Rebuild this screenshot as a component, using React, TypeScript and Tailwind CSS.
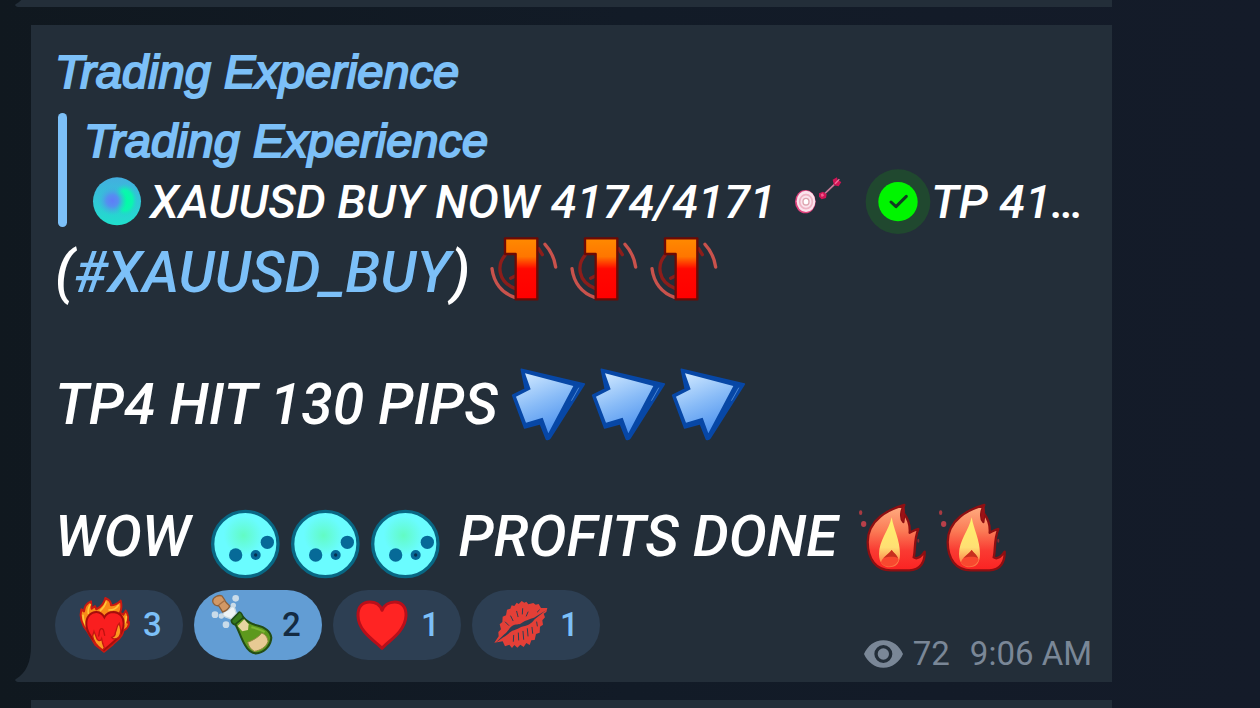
import React from "react";

interface Reaction {
  id: string;
  label: string;
  count: number;
  active: boolean;
  icon: React.ComponentType;
}

const BODY_EMOJI = "w-20 h-[66px] shrink-0 overflow-visible";
const QUOTE_EMOJI = "w-[66px] h-[66px] shrink-0 overflow-visible";
const REACTION_EMOJI = "w-20 h-[70px] shrink-0";

function OrbEmoji() {
  return (
    <svg viewBox="0 0 192 198" className={QUOTE_EMOJI} aria-hidden="true">
      <defs>
        <linearGradient id="orbBase" x1="0" y1="0" x2="0" y2="1">
          <stop offset="0" stopColor="#43aee0" />
          <stop offset="1" stopColor="#1fe0cc" />
        </linearGradient>
        <radialGradient id="orbGreen">
          <stop offset="0" stopColor="#00ffa2" />
          <stop offset="0.6" stopColor="#0cf5b0" />
          <stop offset="1" stopColor="#1fd5cc" stopOpacity="0" />
        </radialGradient>
        <radialGradient id="orbBlue">
          <stop offset="0" stopColor="#5f7cf8" />
          <stop offset="0.4" stopColor="#558ff0" />
          <stop offset="1" stopColor="#3cb4dc" stopOpacity="0" />
        </radialGradient>
      </defs>
      <circle cx="96" cy="97" r="72" fill="url(#orbBase)" />
      <ellipse cx="120" cy="94" rx="38" ry="50" fill="url(#orbGreen)" />
      <circle cx="82" cy="95" r="44" fill="url(#orbBlue)" />
    </svg>
  );
}

function DartEmoji() {
  return (
    <svg viewBox="0 0 192 198" className={QUOTE_EMOJI} aria-hidden="true">
      <ellipse cx="52" cy="98" rx="31" ry="35" fill="#e0447e" />
      <ellipse cx="54" cy="97" rx="28" ry="32" fill="#fbe3ec" />
      <ellipse cx="54" cy="98" rx="19" ry="21" fill="none" stroke="#eeb4c4" strokeWidth="5" />
      <ellipse cx="54" cy="98" rx="9" ry="10" fill="#fff" stroke="#dda3ae" strokeWidth="4" />
      <path d="M104 80L148 38" stroke="#c77a98" strokeWidth="5" />
      <path d="M93 73L105 68L116 76L114 87L101 91L93 83Z" fill="#d11455" />
      <path d="M98 76L105 73L108 80L101 84Z" fill="#ef5d8e" />
      <path d="M134 32L147 25L149 34L160 39L152 52L138 49Z" fill="#d11455" />
      <path d="M141 44L154 31" stroke="#f0709a" strokeWidth="4" />
    </svg>
  );
}

function CheckEmoji() {
  return (
    <svg viewBox="0 0 192 198" className={QUOTE_EMOJI} aria-hidden="true">
      <circle cx="96" cy="98" r="97" fill="#20482f" />
      <circle cx="96" cy="98" r="59" fill="#00f500" />
      <path d="M75 99L90 113L121 82" fill="none" stroke="#123c22" strokeWidth="9" strokeLinecap="round" strokeLinejoin="round" />
    </svg>
  );
}

function OneEmoji() {
  return (
    <svg viewBox="0 0 240 198" className={BODY_EMOJI} aria-hidden="true">
      <defs>
        <linearGradient id="oneFill" x1="0" y1="0" x2="0" y2="1">
          <stop offset="0" stopColor="#ff8a00" />
          <stop offset="0.3" stopColor="#ff7600" />
          <stop offset="0.5" stopColor="#ff0800" />
          <stop offset="1" stopColor="#ff0000" />
        </linearGradient>
      </defs>
      <g fill="none" strokeLinecap="round">
        <path d="M63 46C40 72 38 125 95 146" stroke="#8c1d1a" strokeWidth="10" />
        <path d="M80 115L94 108M164 26L175 44" stroke="#8c1d1a" strokeWidth="10" />
        <path d="M24 86C29 128 54 160 92 172" stroke="#c9524c" strokeWidth="10" />
        <path d="M183 13C201 32 211 54 215 81" stroke="#c9524c" strokeWidth="10" />
      </g>
      <path d="M63 -5H160V178H95V42H63Z" fill="url(#oneFill)" stroke="#6d0a05" strokeWidth="7" strokeLinejoin="round" />
    </svg>
  );
}

function ArrowEmoji() {
  return (
    <svg viewBox="12 0 240 198" className={BODY_EMOJI} aria-hidden="true">
      <defs>
        <linearGradient id="arrowFill" x1="0.2" y1="0" x2="0.6" y2="1">
          <stop offset="0" stopColor="#cce6ff" />
          <stop offset="0.5" stopColor="#88bbf7" />
          <stop offset="1" stopColor="#4c92ef" />
        </linearGradient>
      </defs>
      <path d="M40 -8L229 36L130 192Q122 206 115 201L97 155L50 168L14 70L52 51Z" fill="#0747a6" stroke="#0747a6" strokeWidth="5" strokeLinejoin="round" />
      <path d="M51 4L196 42L121 184L104 137L54 152L24 74L68 52Z" fill="url(#arrowFill)" />
      <path d="M212 48L191 85" stroke="#4b86d4" strokeWidth="3" strokeLinecap="round" />
    </svg>
  );
}

function MoonEmoji() {
  return (
    <svg viewBox="0 0 240 198" className={BODY_EMOJI} aria-hidden="true">
      <defs>
        <radialGradient id="moonFill" cx="0.47" cy="0.37" r="0.3">
          <stop offset="0" stopColor="#62fbc4" />
          <stop offset="1" stopColor="#6afcff" />
        </radialGradient>
      </defs>
      <circle cx="121" cy="120" r="98" fill="url(#moonFill)" stroke="#086784" strokeWidth="10" />
      <circle cx="187" cy="115" r="20" fill="#066a98" />
      <circle cx="92" cy="153" r="20" fill="#066a98" />
      <circle cx="152" cy="153" r="15" fill="#066a98" />
      <circle cx="152" cy="153" r="5" fill="#07304f" />
    </svg>
  );
}

function FlameEmoji() {
  return (
    <svg viewBox="0 0 240 198" className={BODY_EMOJI} aria-hidden="true">
      <defs>
        <linearGradient id="flameFill" x1="0" y1="0" x2="0" y2="1">
          <stop offset="0" stopColor="#ffb083" />
          <stop offset="0.4" stopColor="#fb7a55" />
          <stop offset="0.7" stopColor="#fa3a32" />
          <stop offset="1" stopColor="#fb2222" />
        </linearGradient>
        <linearGradient id="flameCore" x1="0" y1="0" x2="0" y2="1">
          <stop offset="0" stopColor="#fff36b" />
          <stop offset="0.6" stopColor="#ffdf73" />
          <stop offset="1" stopColor="#fb6a3d" />
        </linearGradient>
      </defs>
      <path
        d="M160 3C115 15 50 46 50 114C50 166 76 199 120 199L175 199C210 198 222 172 221 143C212 156 200 168 188 160C194 140 188 110 202 75C192 77 183 83 176 86C178 62 169 42 160 30L157 54C146 42 150 18 160 3Z"
        fill="url(#flameFill)"
        stroke="#8e0f12"
        strokeWidth="7"
        strokeLinejoin="round"
      />
      <path d="M160 5C147 20 148 42 157 53L162 24Z" fill="#9c1216" />
      <path d="M122 40C114 78 84 110 84 150C84 178 98 190 115 190C136 190 147 176 147 150C147 108 128 76 122 40Z" fill="url(#flameCore)" />
      <path d="M122 138C116 150 92 160 90 176C100 192 134 192 143 168C142 158 130 150 122 138Z" fill="#f9482f" />
      <path d="M122 138C116 147 105 153 98 162C110 158 130 156 141 162C138 153 129 148 122 138Z" fill="#c8301f" />
      <ellipse cx="29" cy="26" rx="5" ry="7" fill="#a83a41" />
      <ellipse cx="38" cy="60" rx="8" ry="9" fill="#b8404a" />
      <ellipse cx="202" cy="110" rx="3" ry="6" fill="#8b2a30" />
    </svg>
  );
}

function BurningHeartIcon() {
  return (
    <svg viewBox="0 0 240 210" className={REACTION_EMOJI} aria-hidden="true">
      <path
        d="M97 124C80 106 73 80 79 58L87 64C88 50 94 40 108 34L110 56L120 48L124 58C138 51 148 39 151 24C161 28 168 36 168 46C178 46 187 41 197 32C201 47 199 59 195 68L205 74L212 62C221 74 220 90 217 98L222 96C223 108 214 118 205 122C204 144 181 152 171 166L147 185L121 164Z"
        fill="#f98a18"
        stroke="#c91a12"
        strokeWidth="6"
        strokeLinejoin="round"
      />
      <path d="M84 76C84 92 90 102 95 108M106 44C100 54 98 62 100 70M153 36C150 48 142 56 136 62M190 46C184 56 174 60 162 60M214 80C213 94 208 102 204 106" fill="none" stroke="#ffc63a" strokeWidth="5" strokeLinecap="round" />
      <path d="M147 180C130 162 97 141 94 104C93 80 108 65 125 66C137 67 144 74 148 82C153 72 163 66 176 66C194 67 206 81 206 100C206 140 168 160 147 180Z" fill="#f91e1f" stroke="#a60d0b" strokeWidth="6" />
      <path d="M181 128C186 118 184 108 193 100C195 114 203 124 193 139C185 149 174 149 170 142C178 140 181 136 181 128Z" fill="#fb9a20" stroke="#c41711" strokeWidth="4" />
      <path d="M113 138L117 124L124 142C127 154 137 155 140 146L143 160L148 174L143 180C127 168 115 157 113 138Z" fill="#fb9a20" stroke="#c41711" strokeWidth="4" />
      <path d="M131 138C134 130 131 116 140 116C148 116 146 128 149 136" fill="none" stroke="#bd1210" strokeWidth="4" strokeLinecap="round" />
    </svg>
  );
}

function BottleIcon() {
  return (
    <svg viewBox="0 0 240 210" className={REACTION_EMOJI} aria-hidden="true">
      <g fill="#c9dbe9">
        <circle cx="125" cy="25" r="10" />
        <circle cx="63" cy="74" r="10" />
        <circle cx="96" cy="104" r="10" />
        <circle cx="118" cy="46" r="8" />
        <circle cx="82" cy="78" r="8" />
      </g>
      <path d="M90 66L104 58L114 49L121 52L127 70L112 87L94 81L86 75Z" fill="#eef3f5" stroke="#c7d8e2" strokeWidth="4" />
      <path d="M56 33C56 22 74 13 84 18L92 30C93 37 101 40 107 48C104 58 95 63 86 66L74 47C66 48 56 43 56 33Z" fill="#d29865" stroke="#8d603a" strokeWidth="4" />
      <path d="M74 45L91 32" stroke="#a57146" strokeWidth="4" />
      <path d="M122 100C133 116 139 141 153 165C164 185 179 193 194 189C216 184 231 163 232 143C229 122 209 111 188 106C169 101 157 93 147 81Z" fill="#5d991d" stroke="#234d15" strokeWidth="6" />
      <path d="M112 91L136 66Q142 66 148 83L123 104Q112 101 112 91Z" fill="#377b1c" stroke="#204c16" strokeWidth="5" />
      <path d="M131 108L151 88L164 103L162 120L145 124Z" fill="#e7d5a1" />
      <path d="M161 157C176 151 193 143 203 129C215 133 222 145 222 155C215 172 200 181 181 184C171 179 164 169 161 157Z" fill="#e7ca94" stroke="#8f8b41" strokeWidth="3" />
      <path d="M172 112C190 116 203 120 212 127" stroke="#7db632" strokeWidth="6" fill="none" />
    </svg>
  );
}

function HeartIcon() {
  return (
    <svg viewBox="0 0 240 210" className={REACTION_EMOJI} aria-hidden="true">
      <path d="M147 175C132 156 76 128 75 77C74 49 90 36 110 36C129 36 142 46 147 61C153 46 168 36 185 36C206 36 220 51 219 77C217 127 162 156 147 175Z" fill="#ff2423" stroke="#b90f1a" strokeWidth="9" strokeLinejoin="round" />
    </svg>
  );
}

function LipsIcon() {
  return (
    <svg viewBox="0 0 240 210" className={REACTION_EMOJI} aria-hidden="true">
      <path
        d="M67 158L80 139L79 126L87 118L83 103L91 96L92 80L102 76L105 59L115 56L119 46L127 48L134 38L140 42L149 33L157 38L163 35L169 43L184 39L191 44L200 42L207 54L226 54L223 66L215 71L219 82L211 91L213 104L204 110L203 128L192 132L188 150L178 151L173 165L163 159L155 171L145 164L136 173L127 165L120 174L112 164L99 169L92 154Z"
        fill="#e33f37"
      />
      <path d="M70 159L97 133C108 126 112 112 124 106C136 100 141 106 150 98C162 90 172 88 186 83L222 61L188 88C178 102 166 107 155 109C143 111 138 118 126 121C114 124 106 136 94 142Z" fill="#2d3f53" />
      <g stroke="#2d3f53" strokeWidth="3" strokeLinecap="round">
        <path d="M100 96L110 106M116 78L123 92M134 64L138 80M152 56L151 72M168 66L163 78M194 96L196 108M180 112L182 130M166 116L168 138M153 124L155 148M139 129L140 150M125 136L124 154M202 60L196 66" />
      </g>
    </svg>
  );
}

function ViewsIcon() {
  return (
    <svg viewBox="0 0 117 84" className="h-7 w-[39px] shrink-0" fill="currentColor" role="img" aria-label="Views">
      <path fillRule="evenodd" d="M58 1C31 1 11 18 0 42C11 66 31 83 58 83C86 83 106 66 117 42C106 18 86 1 58 1ZM58 15A27 27 0 1 1 58 69A27 27 0 1 1 58 15Z" />
      <circle cx="58" cy="42" r="17" />
    </svg>
  );
}

function BubbleTail() {
  return (
    <svg viewBox="0 0 16 36" className="absolute right-full bottom-0 h-9 w-4" aria-hidden="true">
      <path d="M16 0C16 16 11 27 1 33C-1 34 1 36 3 36H16Z" fill="#232e39" />
    </svg>
  );
}

const reactions: Reaction[] = [
  { id: "burning-heart", label: "Heart on fire", count: 3, active: false, icon: BurningHeartIcon },
  { id: "champagne", label: "Champagne", count: 2, active: true, icon: BottleIcon },
  { id: "heart", label: "Heart", count: 1, active: false, icon: HeartIcon },
  { id: "kiss", label: "Kiss mark", count: 1, active: false, icon: LipsIcon },
];

function ReactionButton({ reaction }: { reaction: Reaction }) {
  const Icon = reaction.icon;

  return (
    <button
      type="button"
      aria-label={`${reaction.label}, ${reaction.count}`}
      aria-pressed={reaction.active}
      className={`flex h-[70px] w-32 items-center gap-2 rounded-full text-[33px] leading-10 font-medium ${
        reaction.active ? "bg-[#629dd4] text-[#142b42]" : "bg-[#2d3f53] text-[#7cc0f8]"
      }`}
    >
      <Icon />
      <span>{reaction.count}</span>
    </button>
  );
}

function ReplyQuote() {
  return (
    <blockquote className="mt-1.5 flex pl-[3px]">
      <div className="h-[114px] w-[9px] shrink-0 rounded-full bg-[#7cc0f8]" />
      <div className="pl-[17px]">
        <cite className="block font-['Liberation_Sans',Arial,sans-serif] text-[47px] leading-[56px] text-[#7cc0f8] italic [-webkit-text-stroke:2px_#7cc0f8]">
          Trading Experience
        </cite>
        <p className="flex text-[47px] leading-[66px] font-medium whitespace-pre italic">
          <OrbEmoji />
          <span>XAUUSD BUY NOW 4174/4171 </span>
          <DartEmoji />
          <span> </span>
          <CheckEmoji />
          <span>TP 41…</span>
        </p>
      </div>
    </blockquote>
  );
}

function MessageBubble() {
  return (
    <article className="relative bg-[#232e39] pt-3 pr-5 pb-2 pl-6 text-white">
      <h1 className="font-['Liberation_Sans',Arial,sans-serif] text-[47px] leading-[70px] text-[#7cc0f8] italic [-webkit-text-stroke:2px_#7cc0f8]">
        Trading Experience
      </h1>
      <ReplyQuote />

      {/* Message text, a blank line between each paragraph */}
      <div className="mt-[5px] flex flex-col gap-[66px] text-[57px] leading-[66px] font-medium whitespace-pre italic">
        <p className="flex">
          <span>
            (<a href="#XAUUSD_BUY" className="text-[#7cc0f8]">#XAUUSD_BUY</a>){" "}
          </span>
          <OneEmoji />
          <OneEmoji />
          <OneEmoji />
        </p>
        <p className="flex">
          <span>TP4 HIT 130 PIPS </span>
          <ArrowEmoji />
          <ArrowEmoji />
          <ArrowEmoji />
        </p>
        <p className="flex">
          <span>WOW </span>
          <MoonEmoji />
          <MoonEmoji />
          <MoonEmoji />
          <span> PROFITS DONE </span>
          <FlameEmoji />
          <FlameEmoji />
        </p>
      </div>

      <footer className="mt-5 flex items-end justify-between">
        <div className="flex gap-[11px] pb-3.5">
          {reactions.map((reaction) => (
            <ReactionButton key={reaction.id} reaction={reaction} />
          ))}
        </div>
        <div className="flex items-center text-[33px] leading-10 text-[#7a8797]">
          <ViewsIcon />
          <span className="ml-2.5">72</span>
          <time className="ml-5">9:06 AM</time>
        </div>
      </footer>
      <BubbleTail />
    </article>
  );
}

export default function App() {
  return (
    <main className="flex min-h-screen flex-col gap-[18px] overflow-hidden bg-linear-to-r from-[#10181f] via-[#121b27] to-[#141b29] pr-[148px] pl-[31px] font-[Roboto,sans-serif]">
      <div className="relative h-[7px] bg-[#232e39]">
        <BubbleTail />
      </div>
      <MessageBubble />
      <div className="min-h-2 flex-1 bg-[#232e39]" />
    </main>
  );
}
